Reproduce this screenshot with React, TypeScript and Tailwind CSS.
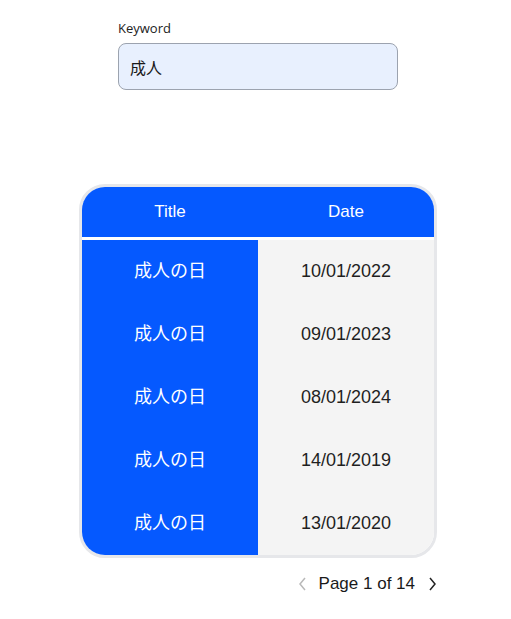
import React from "react";

const rows = [
  ["成人の日", "10/01/2022"],
  ["成人の日", "09/01/2023"],
  ["成人の日", "08/01/2024"],
  ["成人の日", "14/01/2019"],
  ["成人の日", "13/01/2020"],
];

export default function App() {
  return (
    <div
      className="min-h-[619px] w-[511px] bg-white text-[#1a1a1a]"
      style={{ fontFamily: '"Liberation Sans", "Noto Sans CJK JP", sans-serif' }}
    >
      <div className="pl-[118px] pt-[19px]">
        <div className="text-[13px] leading-[18px] text-[#222]" style={{ fontFamily: '"Open Sans", sans-serif' }}>Keyword</div>
        <div className="mt-[6px] flex h-[47px] w-[280px] items-center rounded-[8px] border border-[#9ca3af] bg-[#e8f0fe] px-[11px] text-[16px]" style={{ fontFamily: '"Noto Sans CJK JP", sans-serif' }}>
          成人
        </div>
      </div>
      <div className="ml-[79px] mt-[94px] w-[358px]">
        <div className="overflow-hidden rounded-[26px] border-[3px] border-[#e6e7ea]">
          <div className="grid h-[50px] grid-cols-2 items-center bg-[#0559ff] text-[17px] text-white">
            <div className="text-center">Title</div>
            <div className="text-center">Date</div>
          </div>
          <div className="h-[3px] bg-white" />
          {rows.map(([t, d], i) => (
            <div key={i} className="grid h-[63px] grid-cols-2">
              <div className="flex items-center justify-center bg-[#0559ff] pb-[4px] text-[18px] text-white" style={{ fontFamily: '"Noto Sans CJK JP", sans-serif' }}>{t}</div>
              <div className="flex items-center justify-center bg-[#f4f4f4] text-[18px] text-[#1f1f1f]">{d}</div>
            </div>
          ))}
        </div>
        <div className="mt-[13px] flex items-center justify-end gap-[12px] text-[17px]">
          <svg width="10" height="16" viewBox="0 0 10 16" fill="none" stroke="#b9b9b9" strokeWidth="1.5">
            <path d="M8 2 L3 8 L8 14" />
          </svg>
          <span className="text-[#1a1a1a]">Page 1 of 14</span>
          <svg width="10" height="16" viewBox="0 0 10 16" fill="none" stroke="#222" strokeWidth="1.5">
            <path d="M3 2 L8 8 L3 14" />
          </svg>
        </div>
      </div>
    </div>
  );
}
